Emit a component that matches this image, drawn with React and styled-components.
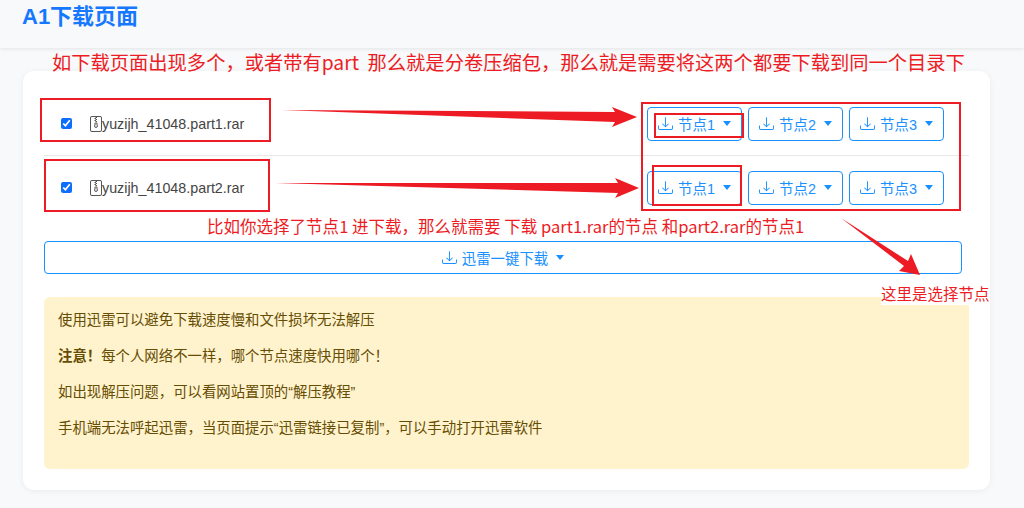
import React from "react";
import styled, { createGlobalStyle } from "styled-components";
import { BsDownload, BsFileZip } from "react-icons/bs";

const Global = createGlobalStyle`
  html, body { margin: 0; padding: 0; background: #f8f9fa; }
  * { box-sizing: border-box; }
  body { font-family: "Liberation Sans", "Noto Sans CJK SC", sans-serif; font-size: 14.4px; color: #444; }
`;

const Page = styled.div`
  position: relative;
  width: 1024px;
  height: 508px;
  overflow: hidden;
`;
const Header = styled.header`
  height: 48px;
  padding: 4px 22px 0;
  background: #f8f9fa;
  box-shadow: 0 1px 4px rgba(0, 0, 0, 0.09);
`;
const Title = styled.h1`
  margin: 0;
  font-size: 22px;
  line-height: 26px;
  font-weight: 700;
  color: #1677ff;
`;
const Card = styled.main`
  width: 967px;
  height: 419px;
  margin: 23px 0 0 23px;
  padding: 21px 21px;
  background: #fff;
  border-radius: 11px;
  box-shadow: 0 1px 6px rgba(0, 0, 0, 0.06);
`;
const Row = styled.div`
  height: ${(p) => (p.$last ? 63 : 64)}px;
  display: flex;
  align-items: center;
  justify-content: space-between;
  padding: 0 25px 0 17px;
  border-bottom: ${(p) => (p.$last ? "none" : "1px solid #e8e8e8")};
`;
const FileCell = styled.label`
  display: flex;
  align-items: center;
  font-size: 14.3px;
  color: #444;
`;
const Check = styled.input`
  width: 11px;
  height: 11px;
  margin: 0 16px 0 0;
  accent-color: #0d6efd;
`;
const FileIcon = styled(BsFileZip)`
  width: 16px;
  height: 16px;
  color: #555;
  margin-right: -2px;
`;
const Buttons = styled.div`
  display: flex;
  gap: 6px;
`;
const NodeButton = styled.button`
  width: 95px;
  height: 34px;
  display: flex;
  align-items: center;
  justify-content: center;
  gap: 5px;
  padding: 0;
  background: #fff;
  border: 1px solid #1890ff;
  border-radius: 4px;
  color: #1890ff;
  font: inherit;
  font-size: 14.4px;
`;
const Caret = styled.i`
  width: 0;
  height: 0;
  margin-left: 3px;
  border-top: 5px solid #1890ff;
  border-left: 4.5px solid transparent;
  border-right: 4.5px solid transparent;
`;
const WideButton = styled(NodeButton)`
  width: 918px;
  height: 33px;
  margin: 22px 0 23px;
`;
const Alert = styled.section`
  height: 172px;
  padding: 13px 14px 15px;
  background: #fff3cd;
  border-radius: 6px;
  color: #664d03;
  font-size: 14.4px;
  line-height: 21.6px;
  p { margin: 0 0 14.4px; }
  strong { font-weight: 700; }
`;

const Note = styled.div`
  position: absolute;
  left: ${(p) => p.$x}px;
  top: ${(p) => p.$y}px;
  font-family: "Noto Sans CJK SC", sans-serif;
  font-size: ${(p) => p.$size}px;
  line-height: 24px;
  color: #ed1c24;
  white-space: pre;
  background: ${(p) => p.$bg || "transparent"};
`;
const Frame = styled.div`
  position: absolute;
  left: ${(p) => p.$x}px;
  top: ${(p) => p.$y}px;
  width: ${(p) => p.$w}px;
  height: ${(p) => p.$h}px;
  border: 2px solid #ed1c24;
`;
const Arrows = styled.svg`
  position: absolute;
  left: 0;
  top: 0;
  pointer-events: none;
`;

const NodeBtn = ({ n }) => (
  <NodeButton>
    <BsDownload size={15} />
    节点{n}
    <Caret />
  </NodeButton>
);

const FileRow = ({ name, last }) => (
  <Row $last={last}>
    <FileCell>
      <Check type="checkbox" defaultChecked />
      <FileIcon />
      {name}
    </FileCell>
    <Buttons>
      <NodeBtn n={1} />
      <NodeBtn n={2} />
      <NodeBtn n={3} />
    </Buttons>
  </Row>
);

const App = () => (
  <Page>
    <Global />
    <Header>
      <Title>A1下载页面</Title>
    </Header>
    <Card>
      <FileRow name="yuzijh_41048.part1.rar" />
      <FileRow name="yuzijh_41048.part2.rar" last />
      <WideButton>
        <BsDownload size={15} />
        迅雷一键下载
        <Caret />
      </WideButton>
      <Alert>
        <p>使用迅雷可以避免下载速度慢和文件损坏无法解压</p>
        <p><strong>注意！</strong>每个人网络不一样，哪个节点速度快用哪个！</p>
        <p>如出现解压问题，可以看网站置顶的“解压教程”</p>
        <p>手机端无法呼起迅雷，当页面提示“迅雷链接已复制”，可以手动打开迅雷软件</p>
      </Alert>
    </Card>

    <Note $x={52} $y={50} $size={19.27}>如下载页面出现多个，或者带有part  那么就是分卷压缩包，那么就是需要将这两个都要下载到同一个目录下</Note>
    <Note $x={207} $y={214} $size={16.53}>比如你选择了节点1 进下载，那么就需要 下载 part1.rar的节点 和part2.rar的节点1</Note>
    <Note $x={881} $y={281} $size={15.5} $bg="#fff">这里是选择节点</Note>
    <Frame $x={40} $y={98} $w={231} $h={44} />
    <Frame $x={44} $y={159} $w={226} $h={53} />
    <Frame $x={641} $y={102} $w={320} $h={109} />
    <Frame $x={654} $y={113} $w={90} $h={25} />
    <Frame $x={652} $y={165} $w={90} $h={41} />
    <Arrows width="1024" height="508" viewBox="0 0 1024 508">
      <g fill="#ed1c24">
        <polygon points="282,110 615,112 612,107 637,117 612,127 615,122" />
        <polygon points="275,183 618,183 615,178 639,188 615,198 618,193" />
        <polygon points="841,218 908,261 911,254 920,275 899,271 904,266" />
      </g>
    </Arrows>
  </Page>
);

export default App;
